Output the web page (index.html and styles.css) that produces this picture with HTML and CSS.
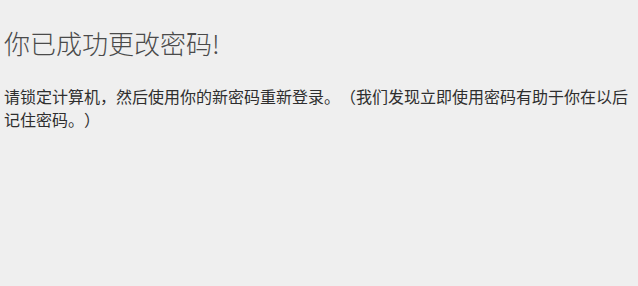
FILE: index.html
```html
<!DOCTYPE html>
<html lang="zh-CN">
<head>
<meta charset="utf-8">
<title>密码已更改</title>
<link rel="stylesheet" href="styles.css">
</head>
<body>
<main class="page">
  <h1 class="title">你已成功更改密码!</h1>
  <p class="message">请锁定计算机，然后使用你的新密码重新登录。（我们发现立即使用密码有助于你在以后记住密码。）</p>
</main>
</body>
</html>
```
FILE: styles.css
```css
html, body {
  margin: 0;
  padding: 0;
  background: #efefef;
}
.page {
  padding: 26px 4px 0 4px;
  font-family: "Noto Sans CJK SC", "Noto Sans", sans-serif;
  text-spacing-trim: space-all;
}
.title {
  margin: 0;
  font-size: 26px;
  font-weight: 300;
  line-height: 34px;
  color: #4a4a4a;
}
.message {
  margin: 25px 0 0 0;
  font-size: 16px;
  line-height: 23px;
  color: #2e2e2e;
  width: 632px;
  text-spacing-trim: space-all;
}
```
